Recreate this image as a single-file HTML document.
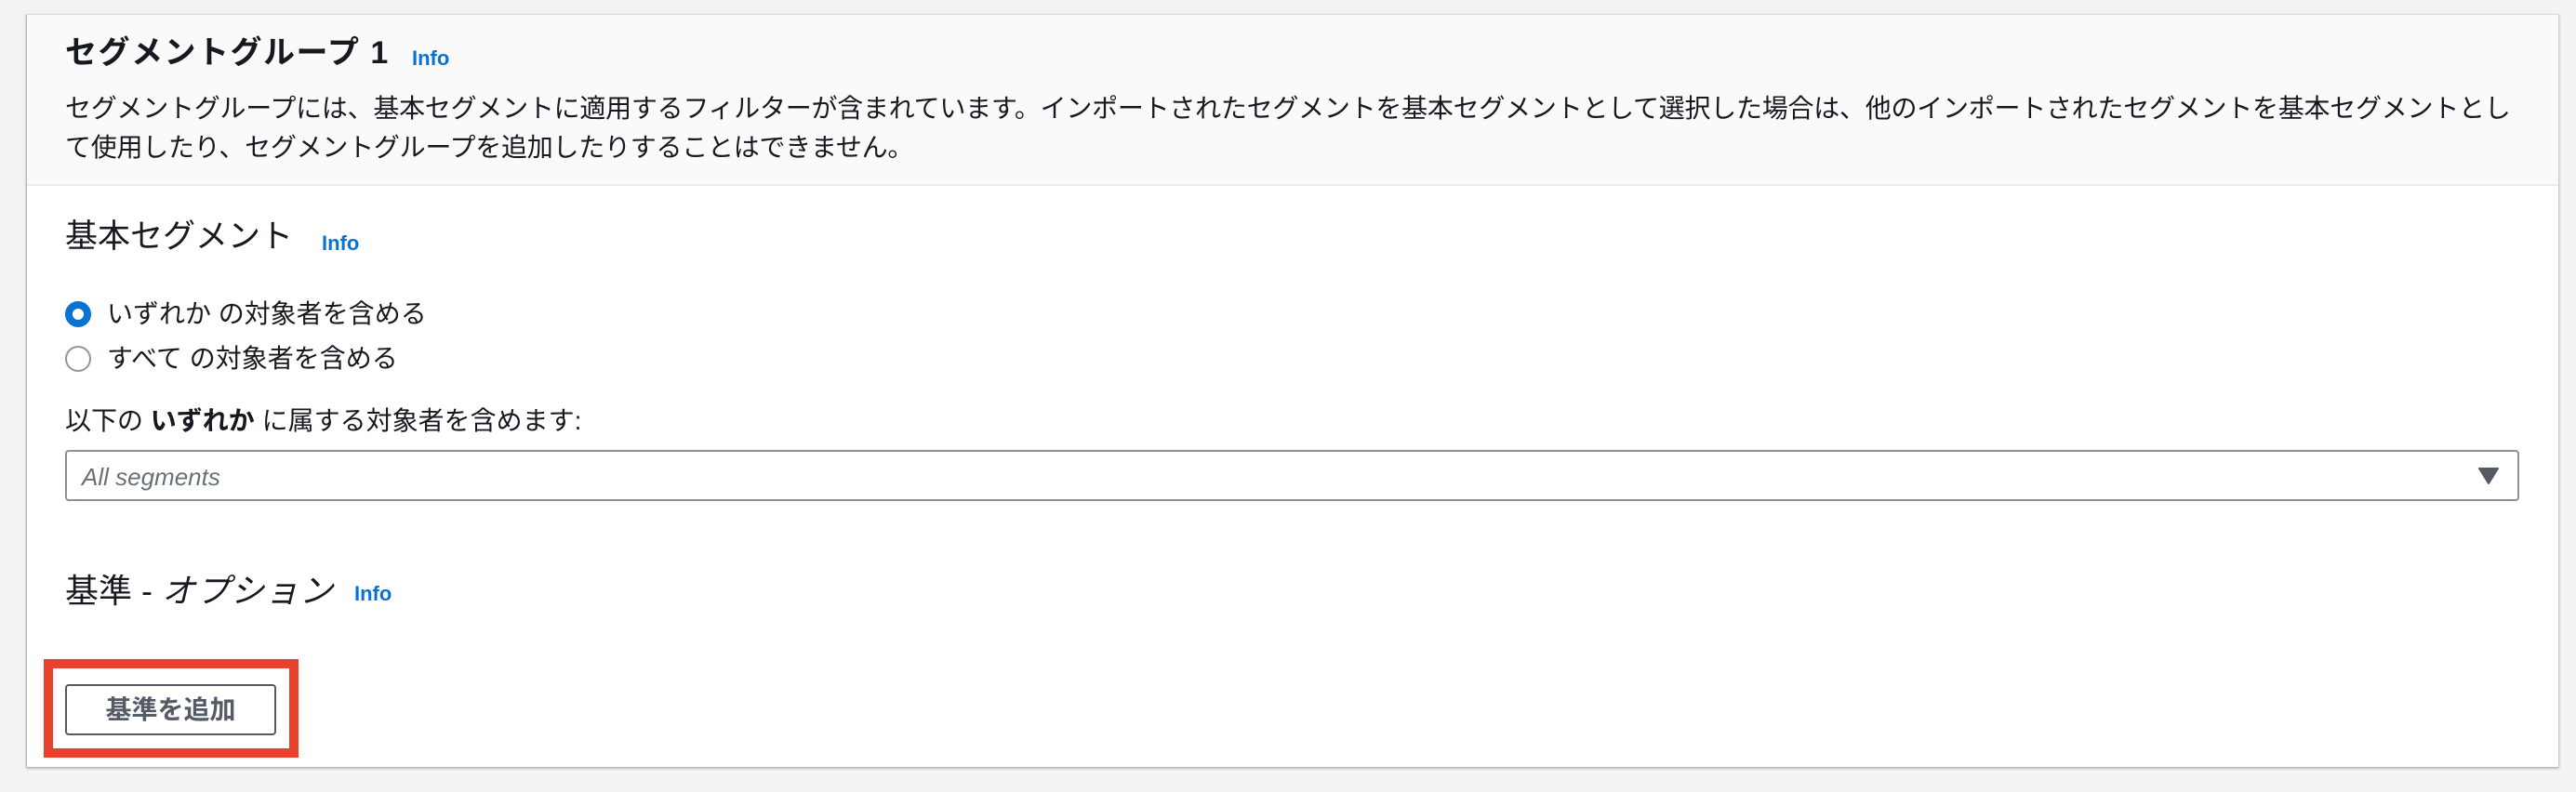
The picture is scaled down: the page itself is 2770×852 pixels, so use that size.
<!DOCTYPE html>
<html><head><meta charset="utf-8"><style>
*{margin:0;padding:0;box-sizing:border-box}
body{width:2770px;height:852px;background:#f2f3f3;font-family:"Liberation Sans","Noto Sans CJK JP",sans-serif;color:#16191f;position:relative;overflow:hidden}
.card{position:absolute;left:29px;top:16px;width:2722px;height:809px;background:#fff;box-shadow:0 1px 2px 1px rgba(0,28,36,.25),-1px 0 1px rgba(0,28,36,.15)}
.hdr{position:absolute;left:0;top:0;width:100%;height:184px;background:#fafafa;border-bottom:2px solid #eaeded}
.a{position:absolute;white-space:nowrap}
.info{color:#0972d3;font-weight:bold;font-size:22px}
.radio{position:absolute;width:28px;height:28px;border-radius:50%}
</style></head><body>
<div class="card">
<div class="hdr"></div>
</div>
<div class="a" style="left:70px;top:35px;font-size:34px;letter-spacing:1.5px;font-weight:bold;line-height:44px">セグメントグループ 1</div>
<div class="a info" style="left:443px;top:48px;line-height:30px">Info</div>
<div class="a" style="left:70px;top:96px;font-size:28px;letter-spacing:-0.25px;line-height:42px;white-space:normal;width:2640px">セグメントグループには、基本セグメントに適用するフィルターが含まれています。インポートされたセグメントを基本セグメントとして選択した場合は、他のインポートされたセグメントを基本セグメントとして使用したり、セグメントグループを追加したりすることはできません。</div>

<div class="a" style="left:70px;top:232px;font-size:35px;line-height:46px">基本セグメント</div>
<div class="a info" style="left:346px;top:247px;line-height:30px">Info</div>

<div class="radio" style="left:70px;top:324px;border:8px solid #0972d3;background:#fff"></div>
<div class="a" style="left:115px;top:318px;font-size:28px;line-height:40px">いずれか の対象者を含める</div>
<div class="radio" style="left:70px;top:372px;border:2px solid #8d9999;background:#fff"></div>
<div class="a" style="left:115px;top:366px;font-size:28px;line-height:40px">すべて の対象者を含める</div>

<div class="a" style="left:70px;top:433px;font-size:28px;line-height:40px">以下の <b>いずれか</b> に属する対象者を含めます:</div>
<div class="a" style="left:70px;top:484px;width:2639px;height:55px;border:2px solid #879596;border-radius:4px;background:#fff"></div>
<div class="a" style="left:88px;top:495px;font-size:26px;line-height:36px;font-style:italic;color:#687078">All segments</div>
<svg class="a" style="left:2664px;top:502px" width="24" height="20" viewBox="0 0 24 20"><path d="M2 2 L22 2 L12 18 Z" fill="#545b64" stroke="#545b64" stroke-width="2" stroke-linejoin="round"/></svg>

<div class="a" style="left:70px;top:612px;font-size:36px;line-height:48px">基準 - <i style="letter-spacing:1px">オプション</i></div>
<div class="a info" style="left:381px;top:624px;line-height:30px">Info</div>

<div class="a" style="left:47px;top:709px;width:274px;height:106px;border:10px solid #e8412c"></div>
<div class="a" style="left:70px;top:736px;width:227px;height:55px;border:2px solid #545b64;border-radius:4px;background:#fff;color:#545b64;font-weight:bold;font-size:28px;line-height:51px;text-align:center">基準を追加</div>
</body></html>
